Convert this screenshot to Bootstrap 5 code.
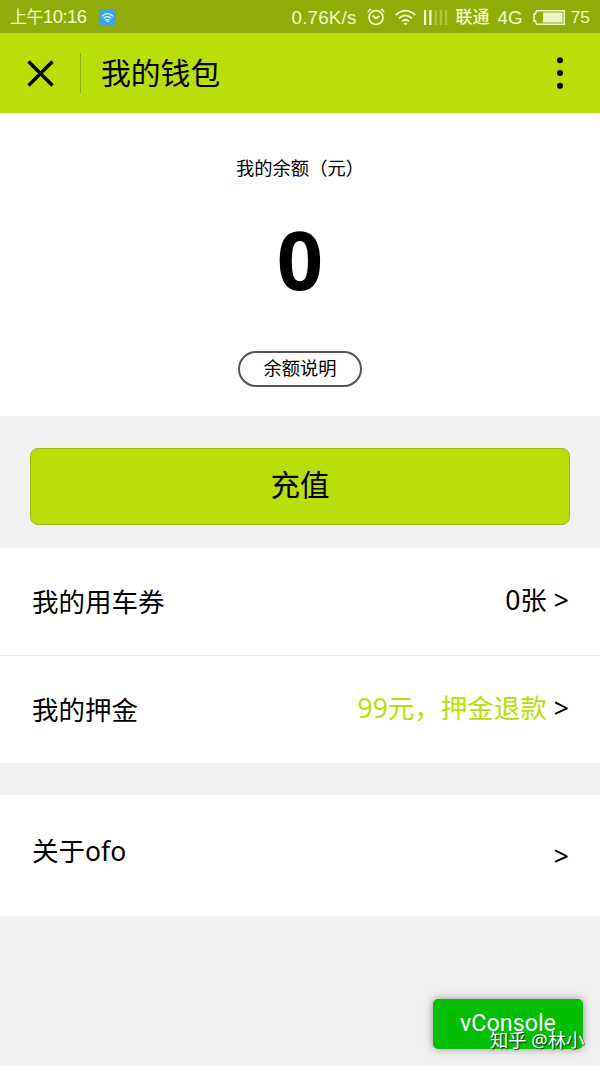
<!DOCTYPE html>
<html lang="zh-CN">
<head>
<meta charset="utf-8">
<meta name="viewport" content="width=device-width, initial-scale=1">
<title>我的钱包</title>
<link href="https://cdn.jsdelivr.net/npm/bootstrap@5.3.0/dist/css/bootstrap.min.css" rel="stylesheet">
<style>
body{font-family:"Noto Sans","Noto Sans CJK SC",sans-serif;background:#f1f1f1;color:#000;min-height:1066px;line-height:1}
svg{display:block;flex:none}
.status{height:33px;background:#90ac08;color:#f3fbc6;font:18.8px/33px "Liberation Sans","Noto Sans CJK SC",sans-serif;padding:1px 10px 0 10px;white-space:nowrap}
.status .cn{font-size:17px}
.clock{font-size:18.4px;letter-spacing:-.5px}
.wifi-app{margin-left:12px}
.speed{letter-spacing:.2px}
.carrier{margin-left:8px;font-weight:500}
.gap-a{margin-left:10px}
.gap-b{margin-left:8px}
.percent{margin-left:5px;font-size:17.4px}
.titlebar{height:80px;background:#b9de0a;padding:0 36px 0 27px}
.rule{width:1px;height:40px;background:#8fae0b;margin:0 20px 0 26px}
.title-text{font-size:29.8px;line-height:40px}
.balance{height:303px}
.caption-text{font-size:18.3px;line-height:24px;margin-top:43px}
.amount{font-size:81px;line-height:90px;margin-top:34px}
.btn-explain{width:124px;height:36px;border:2px solid #555;border-radius:18px;font-size:18.3px;line-height:28px;margin-top:47px;padding:0 0 2px;color:#000}
.recharge{height:132px;padding:32px 30px 0}
.btn-recharge{height:77px;background:#b9de0a;border:1px solid #9fba18;border-radius:8px;font-size:29.5px;line-height:70px;padding:0 0 3px;color:#000}
.entry{height:107px;font-size:26.5px;line-height:40px;padding:0 31px 0 32px}
.entry-value{padding-bottom:3px}
.about{height:121px;margin-top:32px}
.about-label{padding-bottom:9px}
.divider{height:1px;background:#e8e8e8}
.lime{color:#b9de0a}
.arrow{margin-left:7px}
.console{right:17px;bottom:17px;width:150px;height:50px;background:#04be02;border-radius:5px;box-shadow:0 0 9px rgba(0,0,0,.4);color:#fff;font:23.3px/48px Roboto,sans-serif}
.watermark{left:490px;top:1028px;font-size:18.3px;line-height:24px;color:#fff;text-shadow:1px 1px 1px rgba(0,0,0,.75);white-space:nowrap}
</style>
</head>
<body class="position-relative overflow-hidden">
<div class="status d-flex align-items-center">
  <span class="clock"><span class="cn">上午</span>10:16</span>
  <svg class="wifi-app" width="17" height="17" viewBox="0 0 17 17"><rect width="17" height="17" rx="3" fill="#3ba4e2"/><g fill="none" stroke="#e8fbff" stroke-width="1.3"><path d="M3 7.2Q8.5 2 14 7.2M4.8 9.3Q8.5 5.9 12.2 9.3M6.5 11.2Q8.5 9.5 10.5 11.2"/></g><circle cx="8.5" cy="12.3" r="1" fill="#e8fbff"/></svg>
  <span class="speed ms-auto">0.76K/s</span>
  <svg class="gap-a" width="18" height="18" viewBox="0 0 18 18" fill="none" stroke="#f3fbc6" stroke-width="1.7"><circle cx="9" cy="9.5" r="7"/><path d="M5.5 7.5 9 10.5l3.5-2.5M1 4.2Q1.7 1.9 4.2 1M17 4.2Q16.3 1.9 13.8 1"/></svg>
  <svg class="gap-a" width="21" height="17" viewBox="0 0 21 17" fill="none" stroke="#f3fbc6" stroke-width="1.7"><path d="M.7 6Q10.5-2.8 20.3 6M4 9.3Q10.5 3.5 17 9.3M7 12.3Q10.5 9.2 14 12.3"/><path d="m8.5 14.2 2 2 2-2q-2-1.3-4 0Z" fill="#f3fbc6" stroke="none"/></svg>
  <svg class="gap-b" width="24" height="15" viewBox="0 0 24 15" fill="#f3fbc6"><path d="M0 0h2.2v15H0zM5.3 0h2.2v15H5.3z"/><path opacity=".32" d="M10.6 0h2.2v15h-2.2zM15.8 0H18v15h-2.2zM21 0h2.2v15H21z"/></svg>
  <span class="cn carrier">联通</span>
  <span class="gap-b">4G</span>
  <svg class="gap-a" width="33" height="15" viewBox="0 0 33 15"><path d="M3.5.8h27.7v13.4H3.5L2.5 11H1V4h1.5Z" fill="none" stroke="#f3fbc6" stroke-width="1.5"/><path d="M10 2.5h19.5v10H10z" fill="#edf3c9"/></svg>
  <span class="percent">75</span>
</div>
<header class="titlebar d-flex align-items-center">
  <svg width="27" height="27" viewBox="0 0 27 27"><path d="m1.5 1.5 24 24m0-24-24 24" stroke="#000" stroke-width="3.4"/></svg>
  <div class="rule"></div>
  <span class="title-text">我的钱包</span>
  <svg class="ms-auto" width="8" height="34" viewBox="0 0 8 34"><circle cx="4" cy="4.2" r="3"/><circle cx="4" cy="17" r="3"/><circle cx="4" cy="29.8" r="3"/></svg>
</header>
<main>
  <section class="balance bg-white d-flex flex-column align-items-center">
    <div class="caption-text">我的余额（元）</div>
    <div class="amount fw-bold">0</div>
    <button class="btn btn-explain">余额说明</button>
  </section>
  <section class="recharge"><button class="btn btn-recharge w-100">充值</button></section>
  <div class="entry bg-white d-flex align-items-center justify-content-between"><span>我的用车券</span><span class="entry-value">0张<span class="arrow">&gt;</span></span></div>
  <div class="divider"></div>
  <div class="entry bg-white d-flex align-items-center justify-content-between"><span>我的押金</span><span class="entry-value"><span class="lime">99元，押金退款</span><span class="arrow">&gt;</span></span></div>
  <div class="entry about bg-white d-flex align-items-center justify-content-between"><span class="about-label">关于ofo</span><span>&gt;</span></div>
</main>
<div class="console position-absolute text-center">vConsole</div>
<div class="watermark position-absolute">知乎 @林小</div>
<script src="https://cdn.jsdelivr.net/npm/bootstrap@5.3.0/dist/js/bootstrap.bundle.min.js"></script>
</body>
</html>
